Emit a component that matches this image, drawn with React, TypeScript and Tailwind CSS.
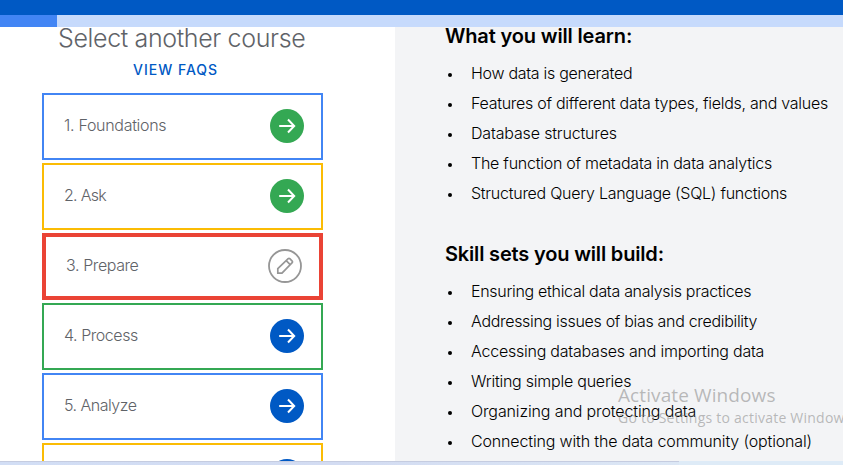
type Course = { label: string; border: string; status: 'done' | 'current' | 'next'; tracking: string };

const courses: Course[] = [
  { label: '1. Foundations', border: 'border-2 border-[#4285f4] px-5', status: 'done', tracking: 'tracking-[-0.3px]' },
  { label: '2. Ask', border: 'border-2 border-[#fbbc04] px-5', status: 'done', tracking: 'tracking-[-0.7px]' },
  { label: '3. Prepare', border: 'border-4 border-[#ea4335] px-5', status: 'current', tracking: 'tracking-[-0.4px]' },
  { label: '4. Process', border: 'border-2 border-[#34a853] px-5', status: 'next', tracking: 'tracking-[-0.45px]' },
  { label: '5. Analyze', border: 'border-2 border-[#4285f4] px-5', status: 'next', tracking: 'tracking-[-0.5px]' },
  { label: '', border: 'border-2 border-[#fbbc04] px-5', status: 'next', tracking: 'tracking-[0px]' },
];

const learn = [
  { text: 'How data is generated', tracking: 'tracking-[-0.29px]' },
  { text: 'Features of different data types, fields, and values', tracking: 'tracking-[-0.27px]' },
  { text: 'Database structures', tracking: 'tracking-[-0.16px]' },
  { text: 'The function of metadata in data analytics', tracking: 'tracking-[-0.25px]' },
  { text: 'Structured Query Language (SQL) functions', tracking: 'tracking-[-0.26px]' },
];

const skills = [
  { text: 'Ensuring ethical data analysis practices', tracking: 'tracking-[-0.3px]' },
  { text: 'Addressing issues of bias and credibility', tracking: 'tracking-[-0.31px]' },
  { text: 'Accessing databases and importing data', tracking: 'tracking-[-0.23px]' },
  { text: 'Writing simple queries', tracking: 'tracking-[-0.23px]' },
  { text: 'Organizing and protecting data', tracking: 'tracking-[-0.13px]' },
  { text: 'Connecting with the data community (optional)', tracking: 'tracking-[-0.15px]' },
];

function StatusIcon({ status }: { status: Course['status'] }) {
  if (status === 'current') {
    return (
      <svg className="size-[34px] shrink-0" viewBox="0 0 34 34" fill="none" stroke="#969696">
        <circle cx="17" cy="17" r="16" strokeWidth="1.8" />
        <path d="M9.8 24.2v-4.6L20.2 9.7q.8-.7 1.6 0l2.4 2.4q.8.8 0 1.6L14 24.2H9.8ZM18.2 11.7l4 4" strokeWidth="1.7" />
      </svg>
    );
  }
  return (
    <svg className="size-[34px] shrink-0" viewBox="0 0 34 34" fill="none">
      <circle cx="17" cy="17" r="17" fill={status === 'done' ? '#34a853' : '#0059c4'} />
      <path d="M9.2 17h14.6M18 10.5l6.2 6.5-6.2 6.5" stroke="#fff" strokeWidth="2" />
    </svg>
  );
}

function BulletList({ items }: { items: { text: string; tracking: string }[] }) {
  return (
    <ul className="text-[16px] font-light leading-[30px] text-black">
      {items.map((item) => (
        <li key={item.text} className="flex h-[30px] items-center whitespace-nowrap">
          <span className="mt-[3px] ml-[3px] mr-[19px] size-1 shrink-0 rounded-full bg-black" />
          <span className={item.tracking}>{item.text}</span>
        </li>
      ))}
    </ul>
  );
}

export default function App() {
  return (
    <div className="relative flex h-[465px] w-[843px] flex-col overflow-hidden bg-white font-['Inter','Liberation_Sans',sans-serif]">
      <div className="h-[15px] shrink-0 bg-[#0059c4]" />
      <div className="h-3 shrink-0 bg-[#c6dafc]">
        <div className="h-full w-[57px] bg-[#4285f4]" />
      </div>
      <main className="flex h-[434px] shrink-0 overflow-hidden">
        <section className="w-[395px] shrink-0 pl-[42px]">
          <div className="flex w-[281px] flex-col">
            <h2 className="h-[27px] whitespace-nowrap pl-[16px] text-[25px] font-light leading-[23px] tracking-[-0.36px] text-[#5f6368]">
              Select another course
            </h2>
            <a className="h-[39px] whitespace-nowrap pl-[91px] text-[14px] font-[450] leading-[32px] tracking-[1px] text-[#0059c4]">VIEW FAQS</a>
            <div className="flex flex-col gap-[3px]">
              {courses.map((c, i) => (
                <div key={i} className={`flex h-[67px] shrink-0 items-center justify-between pb-[2px] ${c.border}`}>
                  <span className={`pb-[2px] text-[16px] font-[350] whitespace-nowrap text-[#5f6368] ${c.tracking}`}>{c.label}</span>
                  <div className="-mr-[3px]"><StatusIcon status={c.status} /></div>
                </div>
              ))}
            </div>
          </div>
        </section>
        <section className="flex-1 bg-[#f3f4f6] pl-[50px]">
          <h3 className="h-[31px] whitespace-nowrap text-[20px] font-semibold leading-[18px] tracking-[-0.15px] text-black">What you will learn:</h3>
          <BulletList items={learn} />
          <h3 className="mt-[30px] h-[38px] whitespace-nowrap text-[20px] font-semibold leading-[32px] tracking-[-0.17px] text-black">Skill sets you will build:</h3>
          <BulletList items={skills} />
        </section>
      </main>
      <div className="flex h-1 shrink-0">
        <div className="w-[679px] border-t border-[#c5cce0] bg-linear-to-r from-[#d2def5] via-[#d3dcf2] to-[#dce7f5]" />
        <div className="flex-1 bg-[#deebf7]" />
      </div>
      <div className="absolute top-[382px] left-[618px] font-['Open_Sans','Noto_Sans',sans-serif] whitespace-nowrap text-[#7b7b7b]/50">
        <div className="text-[19px] leading-[26px] tracking-[0.1px]">Activate Windows</div>
        <div className="text-[14px] leading-[20px] tracking-[0.23px]">Go to Settings to activate Windows.</div>
      </div>
    </div>
  );
}
